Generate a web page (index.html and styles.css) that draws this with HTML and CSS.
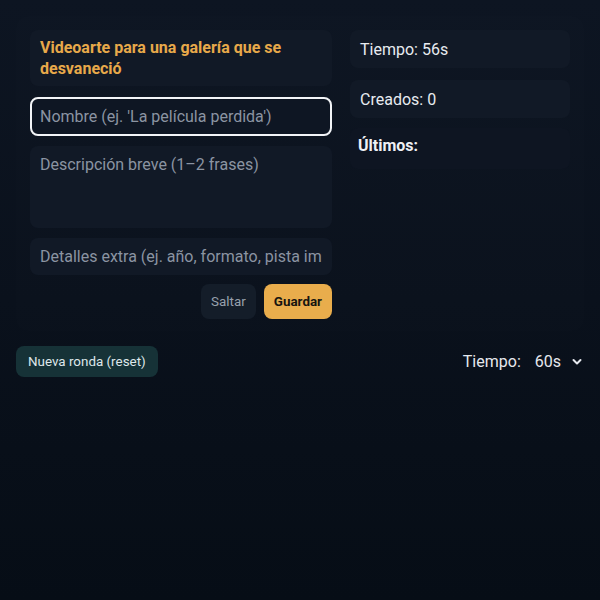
FILE: index.html
```html
<!DOCTYPE html>
<html lang="es">
<head>
<meta charset="utf-8">
<link rel="stylesheet" href="styles.css">
</head>
<body>
<div class="panel">
  <div class="left">
    <div class="prompt">Videoarte para una galería que se desvaneció</div>
    <input class="field focus" type="text" placeholder="Nombre (ej. 'La película perdida')">
    <textarea class="field area" placeholder="Descripción breve (1–2 frases)"></textarea>
    <input class="field" type="text" placeholder="Detalles extra (ej. año, formato, pista importante)">
    <div class="actions">
      <button class="btn skip">Saltar</button>
      <button class="btn save">Guardar</button>
    </div>
  </div>
  <div class="right">
    <div class="stat">Tiempo: 56s</div>
    <div class="stat">Creados: 0</div>
    <div class="recent">Últimos:</div>
  </div>
</div>
<div class="bottom">
  <button class="btn reset">Nueva ronda (reset)</button>
  <div class="timer">
    <span class="timer-label">Tiempo:</span>
    <span class="timer-value">60s</span>
    <svg class="chev" width="10" height="8" viewBox="0 0 10 8"><path d="M1.5 2 L5 5.5 L8.5 2" fill="none" stroke="#e6e9ee" stroke-width="2" stroke-linecap="round" stroke-linejoin="round"/></svg>
  </div>
</div>
</body>
</html>
```
FILE: styles.css
```css
* { box-sizing: border-box; }
html, body { height: 100%; }
body {
  margin: 0;
  padding: 16px;
  background: linear-gradient(180deg, #0d1522 0%, #0a111c 50%, #060d16 100%);
  font-family: Roboto, "Noto Sans", sans-serif;
  color: #e5e8ee;
}
.panel {
  display: grid;
  grid-template-columns: 302px 220px;
  gap: 18px;
  padding: 14px 14px 12px;
  background: rgba(255,255,255,0.006);
  border-radius: 12px;
}
.left { display: flex; flex-direction: column; gap: 10px; }
.prompt {
  background: #111926;
  border-radius: 8px;
  padding: 7px 10px 7px;
  color: #e8a94a;
  font-weight: 700;
  font-size: 16px;
  line-height: 21px;
  margin-bottom: 1px;
}
.field {
  display: block;
  width: 100%;
  background: #111926;
  border: 2px solid transparent;
  border-radius: 8px;
  padding: 0 8px;
  height: 37px;
  font-family: inherit;
  font-size: 16px;
  color: #e5e8ee;
  outline: none;
}
.field::placeholder { color: #8b94a2; opacity: 1; }
.field.focus { border-color: #f2f4f7; height: 39px; background: #0e1623; }
.area {
  height: 82px;
  resize: none;
  padding: 6px 8px;
  line-height: 22px;
}
.actions { display: flex; justify-content: flex-end; gap: 8px; margin-top: -1px; }
.btn {
  font-family: inherit;
  font-size: 13.4px;
  border: none;
  border-radius: 8px;
  height: 35px;
  padding: 0 10px;
  cursor: pointer;
}
.skip { background: #141d29; color: #98a1ad; }
.save { background: #e9ad4c; color: #161410; font-weight: 700; }
.right { display: flex; flex-direction: column; gap: 12px; }
.stat {
  background: #111926;
  border-radius: 8px;
  height: 38px;
  padding: 0 10px;
  display: flex;
  align-items: center;
  font-size: 16px;
  color: #e8ebf0;
}
.recent {
  margin-top: -2px;
  background: #0e1522;
  border-radius: 8px;
  padding: 8px 8px 14px;
  font-size: 16px;
  font-weight: 700;
  color: #eef0f4;
}
.bottom {
  display: flex;
  justify-content: space-between;
  align-items: center;
  margin-top: 15px;
}
.reset { background: #163237; color: #dfe7ea; height: 31px; padding: 0 12px; }
.timer { display: flex; align-items: center; font-size: 16px; color: #e5e8ee; margin-right: 2px; }
.timer-label { margin-right: 14px; }
.timer-value { margin-right: 11px; }
.chev { display: block; }
```
